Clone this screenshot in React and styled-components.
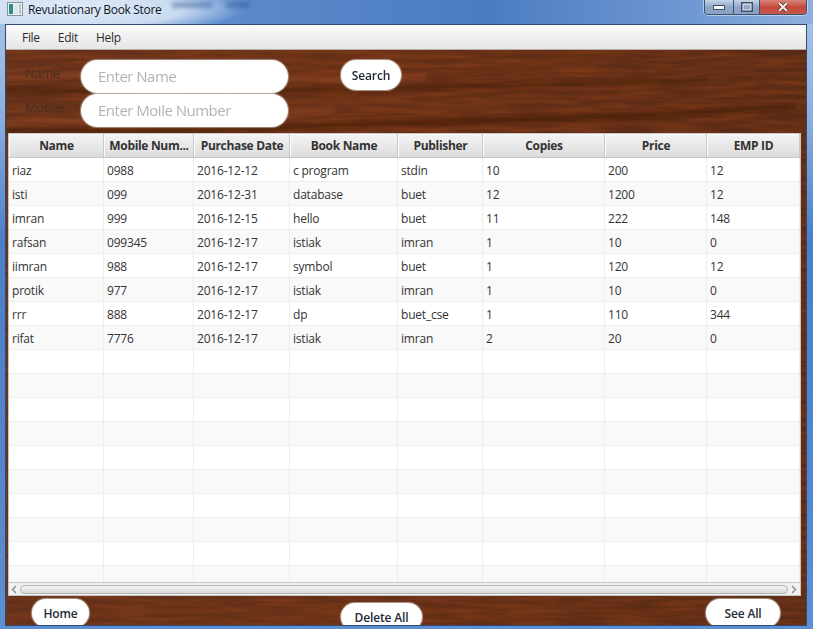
import React from 'react';
import styled, { createGlobalStyle } from 'styled-components';

const GlobalStyle = createGlobalStyle`
  html, body {
    margin: 0;
    padding: 0;
    overflow: hidden;
  }
  * { box-sizing: border-box; }
`;

const FONT = `"Open Sans", "Noto Sans", sans-serif`;

const Desktop = styled.div`
  width: 813px;
  height: 629px;
  display: flex;
  flex-direction: column;
  overflow: hidden;
  font-family: ${FONT};
  background: linear-gradient(180deg, #a9c4e8 0%, #8fb0de 18%, #4c7fc6 38%, #5586cb 75%, #5e8fd2 100%);
`;

const TitleBar = styled.div`
  position: relative;
  height: 24px;
  flex-shrink: 0;
  display: flex;
  align-items: flex-start;
  padding: 2px 6px 0 7px;
  background:
    radial-gradient(ellipse 175px 30px at 70px 8px, rgba(232, 240, 250, 0.95) 0%, rgba(220, 232, 247, 0.85) 65%, rgba(220, 232, 247, 0) 100%),
    linear-gradient(90deg, #6b98d4 0%, #4b7cc2 60%, #6f98d2 85%, #8fb0dd 100%);
`;

const AppIcon = styled.svg`
  width: 16px;
  height: 14px;
  margin-right: 5px;
  flex-shrink: 0;
`;

const TitleText = styled.span`
  font-size: 12px;
  line-height: 16px;
  letter-spacing: -0.32px;
  color: #10151c;
`;

const Smudge = styled.span`
  position: absolute;
  top: 2px;
  left: ${props => props.$left}px;
  width: ${props => props.$width}px;
  height: 6px;
  background: #2f5590;
  opacity: 0.45;
  filter: blur(2px);
`;

const WindowButtons = styled.div`
  margin-left: auto;
  margin-top: -2px;
  display: flex;
  height: 15px;
  border: 1px solid #3c5273;
  border-top: none;
  border-radius: 0 0 4px 4px;
  overflow: hidden;
  box-shadow: 0 0 0 1px rgba(255, 255, 255, 0.45);
`;

const WindowButton = styled.div`
  width: ${props => props.$width}px;
  display: flex;
  align-items: center;
  justify-content: center;
  border-left: ${props => (props.$first ? 'none' : '1px solid #3c5273')};
  background: ${props => (props.$close
    ? 'linear-gradient(180deg, #d8867a 0%, #c34a3c 50%, #c9584a 100%)'
    : 'linear-gradient(180deg, #c5d4e8 0%, #8fa7c8 50%, #87a1c4 100%)')};
`;

const Glyph = styled.svg`
  display: block;
`;

const Window = styled.div`
  flex: 1;
  min-height: 0;
  margin: 0 6px 3px 5px;
  display: flex;
  flex-direction: column;
  border: 1px solid #2f4a72;
  background: #5e2d15;
`;

const MenuBar = styled.div`
  height: 25px;
  flex-shrink: 0;
  display: flex;
  align-items: center;
  padding-left: 16px;
  gap: 18px;
  background: linear-gradient(180deg, #fbfbfb 0%, #e6e6e6 100%);
  border-bottom: 1px solid #b4aea6;
`;

const MenuItem = styled.span`
  font-size: 12px;
  letter-spacing: -0.3px;
  color: #2b2b2b;
`;

const Wood = styled.div`
  position: relative;
  flex: 1;
  min-height: 0;
  display: flex;
  flex-direction: column;
  overflow: hidden;
`;

const WoodTexture = styled.svg`
  position: absolute;
  inset: 0;
  width: 100%;
  height: 100%;
`;

const SearchRow = styled.div`
  position: relative;
  height: 83px;
  flex-shrink: 0;
  padding: 10px 0 0 19px;
  display: flex;
  align-items: flex-start;
`;

const Fields = styled.div`
  display: grid;
  grid-template-columns: 56px 207px;
  grid-auto-rows: 33px;
  row-gap: 1px;
`;

const FieldLabel = styled.label`
  font-size: 13px;
  line-height: 27px;
  letter-spacing: -0.4px;
  color: #44301f;
`;

const Field = styled.input`
  height: 33px;
  width: 207px;
  border: none;
  outline: none;
  border-radius: 17px;
  padding: 0 17px 2px;
  background: #fff;
  font-family: ${FONT};
  font-size: 15px;
  letter-spacing: -0.5px;
  box-shadow: 0 0 1px 1px rgba(210, 200, 190, 0.6);
  &::placeholder {
    color: #b3b3b3;
    opacity: 1;
  }
`;

const PillButton = styled.button`
  width: ${props => props.$width}px;
  height: ${props => props.$height || 30}px;
  margin: ${props => props.$margin || 0};
  border: none;
  padding: 0;
  border-radius: 15px;
  flex-shrink: 0;
  background: #fff;
  font-family: ${FONT};
  font-size: 12px;
  font-weight: 600;
  letter-spacing: -0.15px;
  color: #232a38;
  box-shadow: 0 0 1px 1px rgba(210, 200, 190, 0.7);
`;

const Table = styled.div`
  position: relative;
  height: 463px;
  flex-shrink: 0;
  margin: 0 5px 0 2px;
  display: flex;
  flex-direction: column;
  background: #fff;
  border: 1px solid #c6c6c6;
`;

const COLUMNS = '95px 90px 96px 108px 85px 122px 102px 1fr';

const HeaderRow = styled.div`
  height: 24px;
  flex-shrink: 0;
  display: grid;
  grid-template-columns: ${COLUMNS};
  border-bottom: 1px solid #c8c8c8;
`;

const HeaderCell = styled.div`
  display: flex;
  align-items: center;
  justify-content: center;
  padding-left: 1px;
  font-size: 12px;
  font-weight: 700;
  letter-spacing: -0.32px;
  color: #333;
  white-space: nowrap;
  background: linear-gradient(180deg, #f4f4f4 0%, #dcdcdc 100%);
  border-right: 1px solid #c8c8c8;
  box-shadow: inset 1px 1px 0 #fbfbfb;
`;

const Rows = styled.div`
  flex: 1;
  min-height: 0;
  overflow: hidden;
`;

const Row = styled.div`
  height: 24px;
  display: grid;
  grid-template-columns: ${COLUMNS};
  background: ${props => (props.$odd ? '#f9f9f9' : '#fff')};
`;

const Cell = styled.div`
  display: flex;
  align-items: center;
  padding: 1px 0 0 3px;
  font-size: 12px;
  letter-spacing: -0.2px;
  color: #333;
  border-right: 1px solid #eeeeee;
  border-bottom: 1px solid #eeeeee;
`;

const ScrollBar = styled.div`
  height: 13px;
  flex-shrink: 0;
  display: flex;
  align-items: center;
  padding: 0 3px 0 2px;
  gap: 3px;
  background: #f1f1f1;
  border-top: 1px solid #c4c4c4;
`;

const Thumb = styled.div`
  flex: 1;
  height: 9px;
  border: 1px solid #b5b5b5;
  border-radius: 4px;
  background: linear-gradient(180deg, #f4f4f4 0%, #d9d9d9 100%);
`;

const BottomRow = styled.div`
  position: relative;
  flex: 1;
  min-height: 0;
  display: flex;
  align-items: flex-start;
  padding-top: 3px;
`;

const COLS = ['Name', 'Mobile Num...', 'Purchase Date', 'Book Name', 'Publisher', 'Copies', 'Price', 'EMP ID'];

const DATA = [
  ['riaz', '0988', '2016-12-12', 'c program', 'stdin', '10', '200', '12'],
  ['isti', '099', '2016-12-31', 'database', 'buet', '12', '1200', '12'],
  ['imran', '999', '2016-12-15', 'hello', 'buet', '11', '222', '148'],
  ['rafsan', '099345', '2016-12-17', 'istiak', 'imran', '1', '10', '0'],
  ['iimran', '988', '2016-12-17', 'symbol', 'buet', '1', '120', '12'],
  ['protik', '977', '2016-12-17', 'istiak', 'imran', '1', '10', '0'],
  ['rrr', '888', '2016-12-17', 'dp', 'buet_cse', '1', '110', '344'],
  ['rifat', '7776', '2016-12-17', 'istiak', 'imran', '2', '20', '0'],
];

const EMPTY = ['', '', '', '', '', '', '', ''];
const ROWS = [...DATA, ...Array(10).fill(EMPTY)];

export default function App() {
  return (
    <Desktop>
      <GlobalStyle />
      <TitleBar>
        <AppIcon viewBox="0 0 16 14">
          <rect x="0.5" y="0.5" width="15" height="13" fill="#eef1f4" stroke="#8a949e" />
          <rect x="2" y="2" width="4" height="10" fill="#2f8f82" />
          <rect x="7" y="2" width="4" height="10" fill="#dfe6e8" />
          <rect x="12" y="2" width="2" height="10" fill="#b8c4cc" />
        </AppIcon>
        <TitleText>Revulationary Book Store</TitleText>
        <Smudge $left={172} $width={40} />
        <Smudge $left={226} $width={24} />
        <WindowButtons>
          <WindowButton $width={28} $first>
            <Glyph width="12" height="5" viewBox="0 0 12 5">
              <rect x="0.5" y="0.5" width="11" height="4" fill="#f3f5f8" stroke="#3f4f66" />
            </Glyph>
          </WindowButton>
          <WindowButton $width={26}>
            <Glyph width="12" height="10" viewBox="0 0 12 10">
              <rect x="1" y="1" width="10" height="8" fill="none" stroke="#3f4f66" strokeWidth="2" />
              <rect x="2" y="2" width="8" height="6" fill="none" stroke="#eef2f6" strokeWidth="1" />
            </Glyph>
          </WindowButton>
          <WindowButton $width={47} $close>
            <Glyph width="12" height="10" viewBox="0 0 12 10">
              <path d="M2 1 L10 9 M10 1 L2 9" stroke="#5a2b26" strokeWidth="3.4" />
              <path d="M2 1 L10 9 M10 1 L2 9" stroke="#f4f1ef" strokeWidth="2" />
            </Glyph>
          </WindowButton>
        </WindowButtons>
      </TitleBar>
      <Window>
        <MenuBar>
          <MenuItem>File</MenuItem>
          <MenuItem>Edit</MenuItem>
          <MenuItem>Help</MenuItem>
        </MenuBar>
        <Wood>
          <WoodTexture preserveAspectRatio="none">
            <defs>
              <filter id="grain" x="0" y="0" width="100%" height="100%" colorInterpolationFilters="sRGB">
                <feTurbulence type="fractalNoise" baseFrequency="0.02 0.22" numOctaves="3" seed="11" />
                <feColorMatrix
                  type="matrix"
                  values="0 0 0 0 0.60
                          0 0 0 0 0.27
                          0 0 0 0 0.11
                          0.9 0 0 0 -0.28"
                />
              </filter>
              <linearGradient id="woodBase" x1="0" y1="0" x2="1" y2="0">
                <stop offset="0" stopColor="#62301a" />
                <stop offset="0.45" stopColor="#662f16" />
                <stop offset="1" stopColor="#582a14" />
              </linearGradient>
              <filter id="soft">
                <feGaussianBlur stdDeviation="1.8" />
              </filter>
            </defs>
            <rect width="100%" height="100%" fill="url(#woodBase)" />
            <rect width="100%" height="100%" filter="url(#grain)" />
            <g filter="url(#soft)">
              <path d="M0 24 C120 18 260 30 420 24 L420 30 C260 36 120 24 0 30 Z" fill="#a3502a" opacity="0.3" />
              <path d="M0 37 C120 34 240 42 420 34 C520 32 600 32 700 28 L700 31 C580 38 480 38 400 41 C240 47 120 42 0 45 Z" fill="#3a1c0c" opacity="0.4" />
              <path d="M0 70 C100 66 220 64 330 56 L330 62 C220 72 100 74 0 76 Z" fill="#a3502a" opacity="0.3" />
              <path d="M0 78 C120 76 230 80 330 72 C480 64 640 66 790 54 L790 58 C620 74 460 74 330 78 C220 84 120 82 0 84 Z" fill="#3a1c0c" opacity="0.45" />
            </g>
          </WoodTexture>
          <SearchRow>
            <Fields>
              <FieldLabel>Name</FieldLabel>
              <Field placeholder="Enter Name" />
              <FieldLabel>Mobile</FieldLabel>
              <Field placeholder="Enter Moile Number" />
            </Fields>
            <PillButton $width={60} $margin="0 0 0 53px">Search</PillButton>
          </SearchRow>
          <Table>
            <HeaderRow>
              {COLS.map(col => <HeaderCell key={col}>{col}</HeaderCell>)}
            </HeaderRow>
            <Rows>
              {ROWS.map((row, i) => (
                <Row key={i} $odd={i % 2 === 1}>
                  {row.map((value, j) => <Cell key={j}>{value}</Cell>)}
                </Row>
              ))}
            </Rows>
            <ScrollBar>
              <Glyph width="6" height="9" viewBox="0 0 6 9">
                <path d="M5 1 L1.5 4.5 L5 8" fill="none" stroke="#8a8a8a" strokeWidth="1.4" />
              </Glyph>
              <Thumb />
              <Glyph width="6" height="9" viewBox="0 0 6 9">
                <path d="M1 1 L4.5 4.5 L1 8" fill="none" stroke="#8a8a8a" strokeWidth="1.4" />
              </Glyph>
            </ScrollBar>
          </Table>
          <BottomRow>
            <PillButton $width={57} $height={28} $margin="0 0 0 26px">Home</PillButton>
            <PillButton $width={81} $height={28} $margin="4px 0 0 252px">Delete All</PillButton>
            <PillButton $width={74} $height={28} $margin="0 0 0 284px">See All</PillButton>
          </BottomRow>
        </Wood>
      </Window>
    </Desktop>
  );
}
